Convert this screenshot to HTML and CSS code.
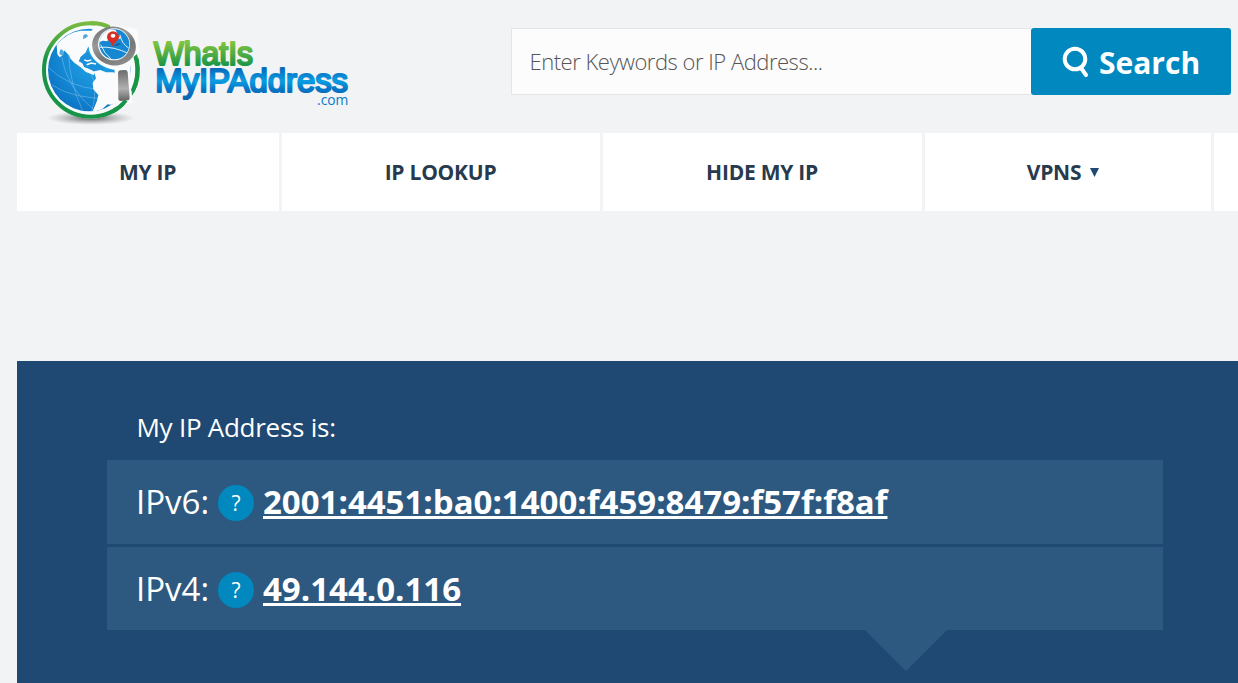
FILE: index.html
```html
<!DOCTYPE html>
<html lang="en">
<head>
<meta charset="utf-8">
<title>What Is My IP Address</title>
<link rel="stylesheet" href="styles.css">
</head>
<body>
<header class="header">
  <a class="logo" aria-label="WhatIsMyIPAddress.com">
    <svg class="logo-art" viewBox="0 0 990 360">
      <defs>
        <linearGradient id="ring" gradientUnits="userSpaceOnUse" x1="0" y1="30" x2="0" y2="330"><stop offset="0" stop-color="#80bd41"/><stop offset=".4" stop-color="#199447"/><stop offset="1" stop-color="#169447"/></linearGradient>
        <radialGradient id="sea" cx=".6" cy=".35" r=".75"><stop offset="0" stop-color="#22a8e8"/><stop offset=".55" stop-color="#168bd6"/><stop offset="1" stop-color="#0a6fc0"/></radialGradient>
        <radialGradient id="shade"><stop offset="0" stop-color="#333" stop-opacity=".8"/><stop offset="1" stop-color="#888" stop-opacity="0"/></radialGradient>
        <linearGradient id="steel" x1="0" y1="0" x2="1" y2="1"><stop offset="0" stop-color="#666"/><stop offset=".35" stop-color="#999"/><stop offset=".6" stop-color="#777"/><stop offset="1" stop-color="#999"/></linearGradient>
        <linearGradient id="grip" x1="0" y1="0" x2="0" y2="1"><stop offset="0" stop-color="#6c6c6c"/><stop offset=".6" stop-color="#b0b0b0"/><stop offset="1" stop-color="#646464"/></linearGradient>
        <linearGradient id="green" gradientUnits="userSpaceOnUse" x1="0" y1="95" x2="0" y2="170"><stop offset="0" stop-color="#84c441"/><stop offset="1" stop-color="#169447"/></linearGradient>
        <linearGradient id="blue" gradientUnits="userSpaceOnUse" x1="0" y1="175" x2="0" y2="265"><stop offset="0" stop-color="#0869b9"/><stop offset=".42" stop-color="#0a9de2"/><stop offset=".7" stop-color="#0876c4"/><stop offset="1" stop-color="#0864b3"/></linearGradient>
        <clipPath id="globe"><circle cx="178" cy="180" r="124"/></clipPath>
        <clipPath id="lens"><circle cx="253" cy="103" r="45"/></clipPath>
      </defs>
      <ellipse cx="182" cy="324" rx="132" ry="21" fill="url(#shade)"/>
      <circle cx="182" cy="180" r="146" fill="#fafbfc"/>
      <circle cx="182" cy="180" r="140" fill="none" stroke="url(#ring)" stroke-width="12"/>
      <circle cx="178" cy="180" r="124" fill="url(#sea)"/>
      <g clip-path="url(#globe)">
        <g fill="none" stroke="#8bcaf1" stroke-width="2" opacity=".7">
          <path d="M53 170Q115 232 210 239M66 225Q130 268 242 265M95 140Q108 230 195 303M116 130Q118 220 160 306M178 175Q207 240 185 304"/>
        </g>
        <path fill="#fafbfc" d="M80 105Q108 68 151 62L193 62 204 72 188 88 183 106 174 112 166 129 152 141 147 154 157 159 163 171 174 175 188 181 195 188 191 195 168 186 151 171 133 158 122 147 117 136 102 121 99 135 89 142 82 133Z"/>
        <path fill="#fafbfc" d="M192 184L211 180 228 187 250 187 272 200 309 211 286 267 246 285 233 283 211 302 188 304 201 272 205 255 190 238 188 219 198 205Z"/>
        <path fill="#4fa8df" d="M160 76l7-4 8 5-8 7-8 3zM90 120l6-2 7 10-6 9-9-5z"/>
      </g>
      <path fill="#fafbfc" d="M206 38L322 57 329 125 309 142 301 172 307 278 249 292 254 180C205 171 173 139 176 100 177 70 190 47 206 38Z"/>
      <path fill="#1b90d8" d="M152 141L166 129 176 128Q186 152 210 166L222 174 220 182 208 178 192 184 174 175 163 171 157 159 147 154Z"/>
      <path fill="none" stroke="#fafbfc" stroke-width="5" d="M163 150l9 3 12-3M170 164l14-5 14 3"/>
      <path fill="none" stroke="url(#ring)" stroke-width="12" d="M180 40Q212 38 239 52M320 146Q331 203 308 244M288 271Q271 292 250 303"/>
      <ellipse cx="252" cy="108" rx="66" ry="58" fill="url(#steel)" transform="rotate(12 252 108)"/>
      <circle cx="252" cy="103" r="48" fill="#f7f8fa"/>
      <circle cx="253" cy="103" r="45" fill="#1688d1"/>
      <g clip-path="url(#lens)">
        <path fill="#fafbfc" d="M207 84l18-19 16-9 16 5 9 18 8 4-14 7-18-3-12 7-12-2-10 5z"/>
        <path fill="none" stroke="#d9effb" stroke-width="3" d="M210 112Q250 108 299 132M270 75Q274 100 298 116M212 104Q220 128 246 150"/>
      </g>
      <path fill="#144b71" opacity=".65" d="M248 108l17-9 7 3-13 6z"/>
      <path fill="#d92c22" d="M248 110C244 94 231 93 231 81A18 17 0 0 1 267 81C267 93 252 95 248 110Z"/>
      <ellipse cx="249" cy="77" rx="7" ry="6" fill="#fff"/>
      <path fill="url(#grip)" d="M264 188Q264 182 271 181L286 180Q292 180 293 187L299 263Q299 271 291 271L272 273Q265 273 265 265Z"/>
      <text class="brand-green" x="371" y="166" textLength="298" lengthAdjust="spacingAndGlyphs">WhatIs</text>
      <text class="brand-blue" x="376" y="246" textLength="578" lengthAdjust="spacingAndGlyphs">MyIPAddress</text>
      <text class="brand-dot" x="861" y="284" textLength="94" lengthAdjust="spacingAndGlyphs">.com</text>
    </svg>
  </a>
  <form class="search">
    <input class="search-field" type="text" aria-label="Search" placeholder="Enter Keywords or IP Address...">
    <button class="search-button" type="button">
      <svg class="search-icon" viewBox="0 0 28 32"><circle cx="13" cy="13" r="10.3"/><path d="M19 22l5 7"/></svg>
      <span>Search</span>
    </button>
  </form>
</header>
<nav class="nav">
  <a class="nav-item">MY IP</a>
  <a class="nav-item">IP LOOKUP</a>
  <a class="nav-item">HIDE MY IP</a>
  <a class="nav-item has-menu">VPNS <svg class="caret" viewBox="0 0 9 9"><path d="M0 0h9L4.5 9z"/></svg></a>
  <a class="nav-item"></a>
</nav>
<main class="panel">
  <h1 class="panel-title">My IP Address is:</h1>
  <div class="addresses">
    <div class="address"><span class="label">IPv6:</span><span class="help">?</span><a class="ip">2001:4451:ba0:1400:f459:8479:f57f:f8af</a></div>
    <div class="address"><span class="label">IPv4:</span><span class="help">?</span><a class="ip">49.144.0.116</a></div>
  </div>
</main>
</body>
</html>
```
FILE: styles.css
```css
* { box-sizing: border-box; }
body {
  margin: 0;
  height: 683px;
  overflow: hidden;
  background: #f1f3f5;
  font-family: "Open Sans", sans-serif;
  color: #283a4d;
}
.header {
  display: flex;
  justify-content: space-between;
  height: 133px;
  padding: 10px 7.5px 0 30px;
}
.logo-art { display: block; width: 330px; height: 120px; }
.brand-green, .brand-blue {
  font-family: "Liberation Sans", Arial, sans-serif;
  font-size: 97px;
  stroke-width: 6.5px;
  stroke-linejoin: round;
}
.brand-green { fill: url(#green); stroke: url(#green); }
.brand-blue { fill: url(#blue); stroke: url(#blue); }
.brand-dot { font-size: 43px; fill: #087bc7; }
.search { display: flex; width: 719.5px; height: 67px; margin-top: 18px; }
.search-field {
  flex: 1;
  min-width: 0;
  padding: 0 18px 2px 17.5px;
  border: 1px solid #e5e5e5;
  border-right: 0;
  border-radius: 0;
  background: #fcfcfc;
  font: 300 22px "Open Sans", sans-serif;
  letter-spacing: -0.48px;
}
.search-field::placeholder { color: #555; opacity: 1; }
.search-button {
  display: flex;
  align-items: center;
  width: 200px;
  padding: 1px 0 0 31.5px;
  border: 0;
  border-radius: 3px;
  background: #0088bf;
  color: #fff;
  font: 700 30px "Open Sans", sans-serif;
}
.search-icon {
  width: 28px;
  height: 32px;
  margin-right: 9px;
  fill: none;
  stroke: #fff;
  stroke-width: 4;
  stroke-linecap: round;
}
.nav {
  display: grid;
  grid-template-columns: 262px 318px 319px 286px 25px;
  gap: 3px;
  height: 78px;
  margin-left: 16.5px;
}
.nav-item {
  display: flex;
  align-items: center;
  justify-content: center;
  background: #fff;
  font-size: 21px;
  font-weight: 700;
  letter-spacing: -0.25px;
}
.has-menu { padding-right: 9px; }
.caret { width: 9px; height: 9px; margin-left: 9px; fill: #1f4972; }
.panel {
  height: 322px;
  margin: 150px 0 0 17px;
  padding: 48px 75px 0 90px;
  background: #1f4972;
  color: #fff;
}
.panel-title {
  height: 51px;
  margin: 0;
  padding-left: 29.5px;
  font-size: 26px;
  font-weight: 400;
  line-height: 36px;
  letter-spacing: -0.26px;
}
.addresses {
  position: relative;
  display: grid;
  grid-template-rows: 84px 83px;
  gap: 3px;
}
.addresses::after {
  content: "";
  position: absolute;
  top: 170px;
  left: 758px;
  border: 41px solid transparent;
  border-top-color: #2d5980;
  border-bottom: 0;
}
.address {
  display: flex;
  align-items: center;
  padding: 2px 0 0 29px;
  background: #2d5980;
  font-size: 33px;
}
.label { width: 82px; padding-bottom: 3px; font-weight: 400; }
.help {
  width: 36px;
  height: 36px;
  margin-right: 9px;
  border-radius: 50%;
  background: #0088bf;
  font-size: 21px;
  line-height: 37px;
  text-align: center;
}
.ip {
  padding-bottom: 3px;
  font-weight: 700;
  text-decoration: underline;
  text-decoration-thickness: 3px;
  text-decoration-skip-ink: none;
}
```
